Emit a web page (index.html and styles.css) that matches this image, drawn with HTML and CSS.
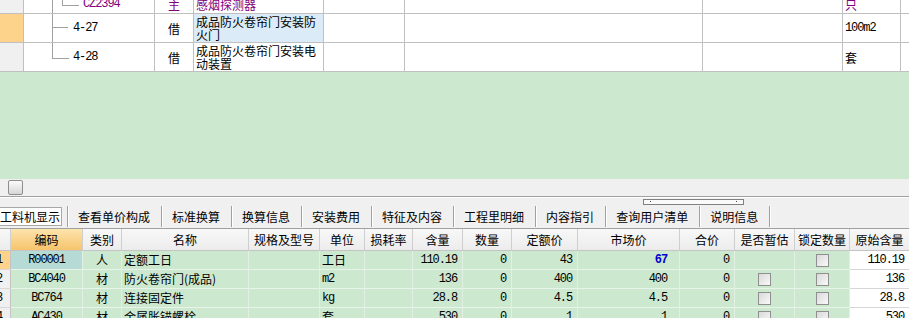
FILE: index.html
```html
<!DOCTYPE html>
<html lang="zh-CN">
<head>
<meta charset="utf-8">
<title>工料机显示</title>
<link rel="stylesheet" href="styles.css">
</head>
<body>
<div class="app">
  <div class="top">
    <div class="tgrid">
      <div class="tc r1 rn"></div>
      <div class="tc r1 code l1 purple"><span class="n">CZ2394</span></div>
      <div class="tc r1 ctr purple">主</div>
      <div class="tc r1 purple">感烟探测器</div>
      <div class="tc r1"></div>
      <div class="tc r1"></div>
      <div class="tc r1"></div>
      <div class="tc r1 purple">只</div>
      <div class="tc r1"></div>

      <div class="tc rn sel"></div>
      <div class="tc code mid"><span class="n">4-27</span></div>
      <div class="tc ctr">借</div>
      <div class="tc name cur">成品防火卷帘门安装防火门</div>
      <div class="tc"></div>
      <div class="tc"></div>
      <div class="tc"></div>
      <div class="tc"><span class="n">100m2</span></div>
      <div class="tc"></div>

      <div class="tc rn"></div>
      <div class="tc code last"><span class="n">4-28</span></div>
      <div class="tc ctr">借</div>
      <div class="tc name">成品防火卷帘门安装电动装置</div>
      <div class="tc"></div>
      <div class="tc"></div>
      <div class="tc"></div>
      <div class="tc">套</div>
      <div class="tc"></div>
    </div>
  </div>

  <div class="hscroll"><div class="thumb"></div></div>

  <div class="tabs">
    <div class="tab active">工料机显示</div>
    <div class="sep"></div><div class="tab">查看单价构成</div>
    <div class="sep"></div><div class="tab">标准换算</div>
    <div class="sep"></div><div class="tab">换算信息</div>
    <div class="sep"></div><div class="tab">安装费用</div>
    <div class="sep"></div><div class="tab">特征及内容</div>
    <div class="sep"></div><div class="tab">工程里明细</div>
    <div class="sep"></div><div class="tab">内容指引</div>
    <div class="sep"></div><div class="tab">查询用户清单</div>
    <div class="sep"></div><div class="tab">说明信息</div>
    <div class="sep"></div>
    <div class="grip"><i></i><i></i></div>
  </div>

  <div class="bgrid">
    <div class="hc"></div>
    <div class="hc hsel">编码</div>
    <div class="hc">类别</div>
    <div class="hc">名称</div>
    <div class="hc">规格及型号</div>
    <div class="hc">单位</div>
    <div class="hc">损耗率</div>
    <div class="hc">含量</div>
    <div class="hc">数量</div>
    <div class="hc">定额价</div>
    <div class="hc">市场价</div>
    <div class="hc">合价</div>
    <div class="hc">是否暂估</div>
    <div class="hc">锁定数量</div>
    <div class="hc">原始含量</div>

    <div class="bc rno rsel"><span class="n">1</span></div>
    <div class="bc ctr csel"><span class="n">R00001</span></div>
    <div class="bc ctr">人</div>
    <div class="bc">定额工日</div>
    <div class="bc"></div>
    <div class="bc">工日</div>
    <div class="bc"></div>
    <div class="bc num"><span class="n">110.19</span></div>
    <div class="bc num"><span class="n">0</span></div>
    <div class="bc num"><span class="n">43</span></div>
    <div class="bc num mp"><span class="n hl">67</span></div>
    <div class="bc num"><span class="n">0</span></div>
    <div class="bc"></div>
    <div class="bc ctr"><span class="cb"></span></div>
    <div class="bc num white"><span class="n">110.19</span></div>

    <div class="bc rno"><span class="n">2</span></div>
    <div class="bc ctr"><span class="n">BC4040</span></div>
    <div class="bc ctr">材</div>
    <div class="bc">防火卷帘门(成品)</div>
    <div class="bc"></div>
    <div class="bc"><span class="n">m2</span></div>
    <div class="bc"></div>
    <div class="bc num"><span class="n">136</span></div>
    <div class="bc num"><span class="n">0</span></div>
    <div class="bc num"><span class="n">400</span></div>
    <div class="bc num mp"><span class="n">400</span></div>
    <div class="bc num"><span class="n">0</span></div>
    <div class="bc ctr"><span class="cb"></span></div>
    <div class="bc ctr"><span class="cb"></span></div>
    <div class="bc num white"><span class="n">136</span></div>

    <div class="bc rno"><span class="n">3</span></div>
    <div class="bc ctr"><span class="n">BC764</span></div>
    <div class="bc ctr">材</div>
    <div class="bc">连接固定件</div>
    <div class="bc"></div>
    <div class="bc"><span class="n">kg</span></div>
    <div class="bc"></div>
    <div class="bc num"><span class="n">28.8</span></div>
    <div class="bc num"><span class="n">0</span></div>
    <div class="bc num"><span class="n">4.5</span></div>
    <div class="bc num mp"><span class="n">4.5</span></div>
    <div class="bc num"><span class="n">0</span></div>
    <div class="bc ctr"><span class="cb"></span></div>
    <div class="bc ctr"><span class="cb"></span></div>
    <div class="bc num white"><span class="n">28.8</span></div>

    <div class="bc rno"><span class="n">4</span></div>
    <div class="bc ctr"><span class="n">AC430</span></div>
    <div class="bc ctr">材</div>
    <div class="bc">金属胀锚螺栓</div>
    <div class="bc"></div>
    <div class="bc">套</div>
    <div class="bc"></div>
    <div class="bc num"><span class="n">530</span></div>
    <div class="bc num"><span class="n">0</span></div>
    <div class="bc num"><span class="n">1</span></div>
    <div class="bc num mp"><span class="n">1</span></div>
    <div class="bc num"><span class="n">0</span></div>
    <div class="bc ctr"><span class="cb"></span></div>
    <div class="bc ctr"><span class="cb"></span></div>
    <div class="bc num white"><span class="n">530</span></div>
  </div>
</div>
</body>
</html>
```

FILE: styles.css
```css
* { box-sizing: border-box; }

html, body {
  margin: 0;
  padding: 0;
}

body {
  width: 909px;
  height: 318px;
  overflow: hidden;
  background: #f0f0f0;
  font-family: "Noto Sans CJK SC", "Liberation Sans", sans-serif;
  font-size: 12px;
  color: #000;
}

.app {
  width: 909px;
  height: 318px;
  overflow: hidden;
}

.n {
  font-family: "Liberation Mono", "DejaVu Sans Mono", monospace;
  font-size: 12px;
  letter-spacing: -1.1px;
}

/* ---------- top grid ---------- */
.top {
  height: 179px;
  background: #cce8cf;
  overflow: hidden;
}

.tgrid {
  display: grid;
  grid-template-columns: 24px 131px 39px 130px 81px 298px 140px 58px 40px;
  grid-auto-rows: 29px;
  margin-top: -15px;
  width: 941px;
  background: #fff;
}

.tc {
  border-right: 1px solid #c0c0c0;
  border-bottom: 1px solid #c0c0c0;
  display: flex;
  align-items: center;
  overflow: hidden;
  line-height: 13px;
  padding-left: 2px;
  white-space: nowrap;
}

.tc.r1 {
  align-items: flex-end;
  padding-bottom: 2px;
}

.tc.rn { background: #f0f0f0; }
.tc.rn.sel { background: #fdd38b; }

.tc.ctr { justify-content: center; padding-left: 0; }

.tc.name {
  white-space: normal;
  word-break: break-all;
}

.tc.cur { background: #dcebf8; }

.purple { color: #800080; }

.code { position: relative; }
.code::before,
.code::after {
  content: "";
  position: absolute;
  border-color: #a0a0a0;
  border-style: solid;
  border-width: 0;
}

.code.l1 { padding-left: 59px; }
.code.l1::before { left: 28px; top: 0; bottom: -1px; border-left-width: 1px; }
.code.l1::after { left: 38px; top: 0; width: 16px; height: 20px; border-left-width: 1px; border-bottom-width: 1px; }

.code.mid { padding-left: 49px; }
.code.mid::before { left: 28px; top: 0; bottom: -1px; border-left-width: 1px; }
.code.mid::after { left: 28px; top: 13px; width: 16px; height: 1px; border-top-width: 1px; }

.code.last { padding-left: 49px; }
.code.last::before { left: 28px; top: 0; width: 16px; height: 15px; border-left-width: 1px; border-bottom-width: 1px; }

/* ---------- horizontal scrollbar ---------- */
.hscroll {
  height: 18px;
  background: #f0f0f0;
  border-bottom: 1px solid #a0a0a0;
  padding: 1px 0 0 8px;
}

.thumb {
  width: 15px;
  height: 15px;
  border: 1px solid #8e8e8e;
  border-radius: 2px;
  background: linear-gradient(#fbfbfb, #d6d6d6);
}

/* ---------- tab bar ---------- */
.tabs {
  position: relative;
  height: 32px;
  display: flex;
  align-items: center;
  padding-top: 6px;
  background: #f0f0f0;
  border-top: 1px solid #ffffff;
  border-bottom: 1px solid #a0a0a0;
}

.tab {
  padding: 0 11px 0 10px;
  line-height: 17px;
  white-space: nowrap;
  color: #000;
}

.tab.active {
  margin-left: -2px;
  margin-right: 5px;
  padding: 0 1px;
  height: 19px;
  line-height: 17px;
  border: 1px solid #a8a8a8;
  background: #fff;
}

.sep {
  width: 1px;
  height: 21px;
  background: #a0a0a0;
  box-shadow: 1px 0 0 #ffffff;
}

.grip {
  position: absolute;
  left: 643px;
  top: 1px;
  width: 101px;
  height: 6px;
  border: 1px solid #808080;
  background: #fafafa;
  display: flex;
  justify-content: space-between;
  padding: 1px 6px 0 6px;
}

.grip i {
  display: block;
  width: 1px;
  height: 1px;
  background: #404040;
}

/* ---------- bottom grid ---------- */
.bgrid {
  display: grid;
  grid-template-columns: 11px 72px 39px 127px 71px 45px 48px 50px 49px 66px 102px 55px 60px 55px 60px;
  grid-template-rows: 22px;
  grid-auto-rows: 19px;
  width: 910px;
}

.hc {
  display: flex;
  align-items: center;
  justify-content: center;
  background: linear-gradient(#f8f8f8, #ececec);
  border-right: 1px solid #cfcfcf;
  border-bottom: 1px solid #c4c4c4;
  white-space: nowrap;
  overflow: hidden;
  line-height: 14px;
}

.hc.hsel {
  background: linear-gradient(#fde4ad, #f6c46b);
}

.bc {
  display: flex;
  align-items: center;
  background: #cce8cf;
  border-right: 1px solid #e2efe3;
  border-bottom: 1px solid #e8f3e9;
  white-space: nowrap;
  overflow: hidden;
  padding-left: 2px;
  line-height: 14px;
}

.bc.ctr { justify-content: center; padding-left: 0; }
.bc.num { justify-content: flex-end; padding: 0 5px 0 0; }
.bc.mp { padding-right: 12px; }

.bc.rno {
  background: #f0f0f0;
  justify-content: flex-end;
  padding: 0 8px 0 0;
  border-right: 1px solid #c4c4c4;
  border-bottom: 1px solid #d8d8d8;
}
.bc.rno.rsel { background: #fdd38b; }

.bc.csel { background: #b6dbd6; }

.bc.white {
  background: #fff;
  border-bottom: 1px solid #d6d6d6;
  border-right: 0;
  padding-right: 6px;
}

.hl {
  color: #0000cc;
  font-weight: bold;
}

.cb {
  display: block;
  width: 13px;
  height: 13px;
  border: 1px solid #8f8f8f;
  background: linear-gradient(135deg, #d9d9d9, #f9f9f9);
}
```
